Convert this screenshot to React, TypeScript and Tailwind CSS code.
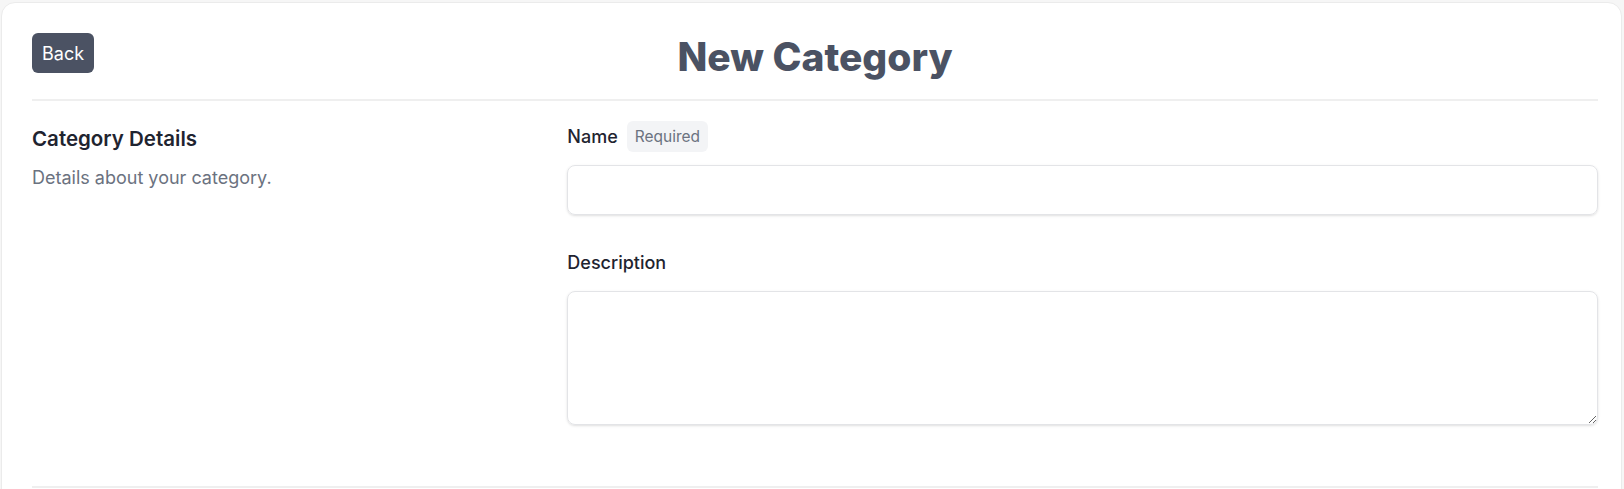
import React, { useState } from 'react';

const App: React.FC = () => {
  const [name, setName] = useState('');
  const [description, setDescription] = useState('');

  return (
    <div className="min-h-screen bg-[#f6f6f6] pt-[2px] pl-[1px] pr-[2px] font-['Inter',sans-serif]">
      <div className="min-h-[600px] rounded-[14px] border border-[#ebebeb] bg-white pl-[30px] pr-[23px] pt-[30px]">
        {/* header */}
        <div className="grid grid-cols-[1fr_auto_1fr] items-center">
          <div>
            <button className="h-[40px] rounded-[6px] bg-[#4b5263] px-[10px] text-[18px] text-white">
              Back
            </button>
          </div>
          <h1 className="text-[39px] leading-none font-extrabold text-[#4b5263] translate-y-[3px]">
            New Category
          </h1>
          <div />
        </div>

        <div className="mt-[26px] h-[2px] bg-[#efefef]" />

        {/* form */}
        <div className="grid grid-cols-3 gap-x-10 pt-[20px] pb-[61px]">
          <div className="pt-[4px]">
            <h2 className="text-[20.5px] leading-[28px] font-semibold text-[#1f2430]">Category Details</h2>
            <p className="mt-[11px] text-[18px] leading-[28px] text-[#6b7280]">Details about your category.</p>
          </div>

          <div className="col-span-2">
            <div className="flex items-center gap-[9px]">
              <label className="text-[18px] leading-[28px] font-medium text-[#1f2430]">Name</label>
              <span className="rounded-[6px] bg-[#f3f4f6] px-[8px] py-[4px] text-[15.5px] leading-[23px] text-[#6b7280]">
                Required
              </span>
            </div>
            <input
              value={name}
              onChange={(e) => setName(e.target.value)}
              className="mt-[13px] block h-[50px] w-full rounded-[8px] border border-[#e3e4e7] px-3 text-[18px] shadow-sm outline-none"
            />

            <label className="mt-[34px] block text-[18px] leading-[28px] font-medium text-[#1f2430]">Description</label>
            <textarea
              value={description}
              onChange={(e) => setDescription(e.target.value)}
              className="mt-[14px] block h-[134px] w-full rounded-[8px] border border-[#e3e4e7] px-3 py-2 text-[18px] shadow-sm outline-none"
            />
          </div>
        </div>

        <div className="h-[2px] bg-[#efefef]" />
      </div>
    </div>
  );
};

export default App;
